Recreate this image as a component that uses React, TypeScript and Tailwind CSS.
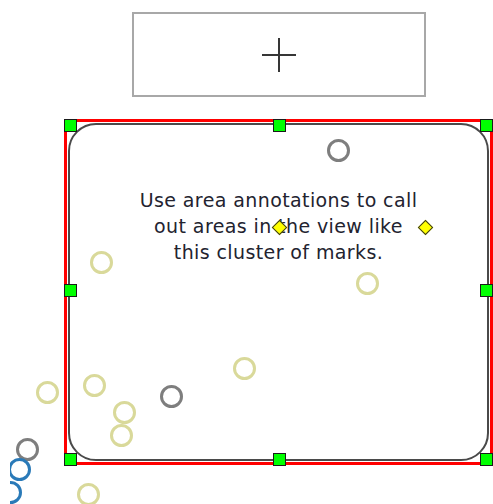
import React from "react";

type Mark = { x: number; y: number; c: string };

const YEL = "#d9d99a";
const GRY = "#7e7e7e";
const BLU = "#2a7ab8";

const marks: Mark[] = [
  { x: 338.5, y: 150.7, c: GRY },
  { x: 101.7, y: 262.5, c: YEL },
  { x: 367.3, y: 283.3, c: YEL },
  { x: 244, y: 368.3, c: YEL },
  { x: 47.7, y: 392.3, c: YEL },
  { x: 94, y: 385, c: YEL },
  { x: 171, y: 396, c: GRY },
  { x: 124.3, y: 412.3, c: YEL },
  { x: 121.7, y: 435, c: YEL },
  { x: 27.7, y: 449.3, c: GRY },
  { x: 19, y: 469.3, c: BLU },
  { x: 10, y: 492.7, c: BLU },
  { x: 88.3, y: 494, c: YEL },
];

const handles: [number, number][] = [
  [64, 119],
  [273, 119],
  [480, 119],
  [64, 284],
  [480, 284],
  [64, 453],
  [273, 453],
  [480, 453],
];

const diamonds: [number, number][] = [
  [279.3, 227.7],
  [425, 227.7],
];

export default function App() {
  return (
    <div className="relative w-[493px] h-[504px] bg-white overflow-hidden">
      {/* top add box */}
      <div className="flex flex-col">
        <div className="mt-[12px] ml-[132px] w-[294px] h-[85px] border-2 border-[#a8a8a8] flex items-center justify-center">
          <svg width="36" height="36" viewBox="0 0 36 36">
            <line x1="1" y1="18" x2="35" y2="18" stroke="#363636" strokeWidth="2" />
            <line x1="18" y1="1" x2="18" y2="35" stroke="#363636" strokeWidth="2" />
          </svg>
        </div>

        {/* annotation area */}
        <div className="mt-[22px] ml-[64px] w-[429px] h-[346px] border-[3px] border-[#ff0000] p-[1px]">
          <div className="h-full rounded-[28px] border-2 border-[#4a4a4a] pt-[62px] flex flex-col items-center">
            <p
              className="text-center text-[19px] leading-[26px] tracking-[0.4px] text-[#23232f]"
              style={{ fontFamily: '"DejaVu Sans", Verdana, sans-serif' }}
            >
              Use area annotations to call
              <br />
              out areas in the view like
              <br />
              this cluster of marks.
            </p>
          </div>
        </div>
      </div>

      {/* marks layer, clipped at x=10 */}
      <div className="absolute top-0 bottom-0 left-[10px] right-0 overflow-hidden pointer-events-none">
        {marks.map((m, i) => (
          <div
            key={i}
            className="absolute w-[23px] h-[23px] rounded-full border-[3px]"
            style={{ left: m.x - 11.5 - 10, top: m.y - 11.5, borderColor: m.c }}
          />
        ))}
      </div>

      {/* diamonds */}
      {diamonds.map(([x, y], i) => (
        <div
          key={i}
          className="absolute w-[11px] h-[11px] rotate-45 bg-[#ffff00] border border-[#3a3a1a]"
          style={{ left: x - 5.5, top: y - 5.5 }}
        />
      ))}

      {/* handles */}
      {handles.map(([x, y], i) => (
        <div
          key={i}
          className="absolute w-[13px] h-[13px] bg-[#00ff00] border border-[#1a1a1a]"
          style={{ left: x, top: y }}
        />
      ))}
    </div>
  );
}
